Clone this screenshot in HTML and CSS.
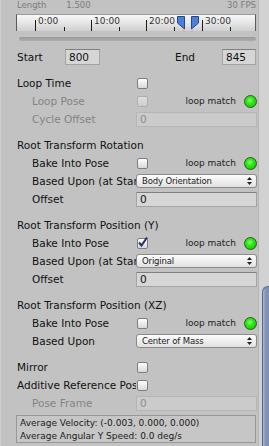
FILE: index.html
```html
<!DOCTYPE html>
<html>
<head>
<meta charset="utf-8">
<link rel="stylesheet" href="styles.css">
</head>
<body>
<div class="window">
  <div class="panel">
    <div class="len-row"><span class="len-label">Length</span><span class="len-val">1.500</span><span class="fps">30 FPS</span></div>
    <div class="ruler">
      <div class="tick major" style="left:18px"></div><span class="tlabel" style="left:21px">0:00</span>
      <div class="tick minor" style="left:47px"></div>
      <div class="tick major" style="left:74px"></div><span class="tlabel" style="left:77px">10:00</span>
      <div class="tick minor" style="left:102px"></div>
      <div class="tick major" style="left:129px"></div><span class="tlabel" style="left:132px">20:00</span>
      <div class="tick minor" style="left:157px"></div>
      <div class="tick major" style="left:185px"></div><span class="tlabel" style="left:188px">30:00</span>
      <div class="tick minor" style="left:213px"></div>
      <svg class="marker" style="left:160px" width="9" height="16" viewBox="0 0 9 16"><polygon points="0.5,0.5 7.5,0.5 7.5,13 0.5,7" fill="#4a7fda" stroke="#23468e"/><line x1="6" y1="14" x2="8" y2="16" stroke="#e8a070"/></svg>
      <svg class="marker" style="left:173px" width="9" height="16" viewBox="0 0 9 16"><polygon points="1.5,0.5 8.5,0.5 8.5,7 1.5,13" fill="#4a7fda" stroke="#23468e"/><line x1="3" y1="14" x2="1" y2="16" stroke="#e8a0c0"/></svg>
    </div>
    <div class="slider"></div>
    <div class="range-row">
      <span class="r-label">Start</span><span class="field short">800</span>
      <span class="r-label end">End</span><span class="field short">845</span>
    </div>

    <div class="group">
      <div class="row"><span class="label">Loop Time</span><div class="ctrl"><span class="cb"></span></div></div>
      <div class="row dis"><span class="label ind">Loop Pose</span><div class="ctrl"><span class="cb off"></span><span class="match">loop match</span><span class="dot"></span></div></div>
      <div class="row dis"><span class="label ind">Cycle Offset</span><div class="ctrl"><span class="field wide off">0</span></div></div>
    </div>

    <div class="group">
      <div class="row"><span class="label">Root Transform Rotation</span></div>
      <div class="row"><span class="label ind">Bake Into Pose</span><div class="ctrl"><span class="cb"></span><span class="match">loop match</span><span class="dot"></span></div></div>
      <div class="row"><span class="label ind">Based Upon (at Start)</span><div class="ctrl"><span class="drop">Body Orientation<svg class="arr" width="5" height="8" viewBox="0 0 5 8"><polygon points="2.5,0 5,3 0,3" fill="#222"/><polygon points="0,5 5,5 2.5,8" fill="#222"/></svg></span></div></div>
      <div class="row"><span class="label ind">Offset</span><div class="ctrl"><span class="field wide">0</span></div></div>
    </div>

    <div class="group">
      <div class="row"><span class="label">Root Transform Position (Y)</span></div>
      <div class="row"><span class="label ind">Bake Into Pose</span><div class="ctrl"><span class="cb on"><svg width="11" height="11" viewBox="0 0 11 11"><path d="M2 5.5 L4.5 8.5 L10 0.5" fill="none" stroke="#1f3466" stroke-width="2"/></svg></span><span class="match">loop match</span><span class="dot"></span></div></div>
      <div class="row"><span class="label ind">Based Upon (at Start)</span><div class="ctrl"><span class="drop">Original<svg class="arr" width="5" height="8" viewBox="0 0 5 8"><polygon points="2.5,0 5,3 0,3" fill="#222"/><polygon points="0,5 5,5 2.5,8" fill="#222"/></svg></span></div></div>
      <div class="row"><span class="label ind">Offset</span><div class="ctrl"><span class="field wide">0</span></div></div>
    </div>

    <div class="group">
      <div class="row"><span class="label">Root Transform Position (XZ)</span></div>
      <div class="row"><span class="label ind">Bake Into Pose</span><div class="ctrl"><span class="cb"></span><span class="match">loop match</span><span class="dot"></span></div></div>
      <div class="row"><span class="label ind">Based Upon</span><div class="ctrl"><span class="drop">Center of Mass<svg class="arr" width="5" height="8" viewBox="0 0 5 8"><polygon points="2.5,0 5,3 0,3" fill="#222"/><polygon points="0,5 5,5 2.5,8" fill="#222"/></svg></span></div></div>
    </div>

    <div class="group">
      <div class="row"><span class="label">Mirror</span><div class="ctrl"><span class="cb"></span></div></div>
      <div class="row"><span class="label">Additive Reference Pose</span><div class="ctrl"><span class="cb"></span></div></div>
      <div class="row dis"><span class="label ind">Pose Frame</span><div class="ctrl"><span class="field wide off">0</span></div></div>
    </div>

    <div class="info">
      <div>Average Velocity: (-0.003, 0.000, 0.000)</div>
      <div>Average Angular Y Speed: 0.0 deg/s</div>
    </div>
  </div>
  <div class="gutter"><div class="thumb"></div></div>
</div>
</body>
</html>
```
FILE: styles.css
```css
html, body {
  margin: 0;
  padding: 0;
}
body {
  background: #c2c2c2;
  font-family: "DejaVu Sans", sans-serif;
  font-size: 10.5px;
  color: #111;
}
.window {
  display: flex;
  width: 269px;
  height: 446px;
  overflow: hidden;
}
.panel {
  width: 258px;
  box-sizing: border-box;
  padding: 0 2px 0 15px;
  border-left: 1px solid #cdcdcd;
  margin-left: 0;
}
.len-row {
  display: flex;
  height: 11px;
  line-height: 11px;
  font-size: 8.5px;
  color: #7c7c7c;
  padding-left: 1px;
}
.len-val { margin-left: 20px; }
.fps { margin-left: auto; }
.ruler {
  position: relative;
  margin-top: 3px;
  height: 17px;
  box-sizing: border-box;
  border: 1px solid #5a5a5a;
  border-top-color: #9a9a9a;
  border-bottom: none;
  background: linear-gradient(#f7f7f7, #e6e6e6 50%, #cfcfcf);
}
.tick {
  position: absolute;
  bottom: 0;
  width: 1px;
  background: #1a1a1a;
}
.tick.major { height: 11px; }
.tick.minor { height: 4px; }
.tlabel {
  position: absolute;
  top: 1px;
  font-size: 9px;
  line-height: 11px;
  color: #333;
}
.marker {
  position: absolute;
  top: 1px;
}
.slider {
  margin: 6px 0 0 3px;
  height: 4px;
  border-radius: 2px;
  background: linear-gradient(#9a9a9a, #adadad);
}
.range-row {
  display: flex;
  align-items: center;
  height: 18px;
  margin-top: 7px;
  padding-left: 1px;
}
.r-label { width: 48px; }
.r-label.end { margin-left: auto; width: 47px; }
.field {
  box-sizing: border-box;
  height: 16px;
  line-height: 14px;
  padding-left: 3px;
  background: #d6d6d6;
  border: 1px solid #a4a4a4;
  border-top-color: #808080;
  color: #111;
}
.field.short { width: 35px; }
.field.short:last-child { width: 34px; }
.field.wide { width: 121px; height: 15px; line-height: 13px; }
.field.off {
  background: #cbcbcb;
  border-color: #b6b6b6;
  color: #8e8e8e;
}
.group { margin-top: 8px; }
.group:first-of-type { margin-top: 10px; }
.row {
  display: flex;
  align-items: center;
  height: 18px;
  padding-left: 1px;
}
.label {
  box-sizing: border-box;
  width: 119px;
  flex: none;
  white-space: nowrap;
  overflow: hidden;
}
.label.ind { padding-left: 15px; }
.row:not(:has(.ctrl)) .label { width: auto; overflow: visible; }
.row.dis .label { color: #848484; }
.ctrl {
  display: flex;
  align-items: center;
  width: 121px;
  flex: none;
}
.cb {
  box-sizing: border-box;
  width: 11px;
  height: 11px;
  margin-left: 1px;
  border: 1px solid #7e7e7e;
  border-radius: 2px;
  background: linear-gradient(#fefefe, #d9d9d9);
  position: relative;
}
.cb.off {
  border-color: #adadad;
  background: linear-gradient(#dedede, #cdcdcd);
}
.cb.on svg {
  position: absolute;
  left: -1px;
  top: -2px;
}
.match {
  margin-left: auto;
  margin-right: 8px;
  font-size: 9px;
  color: #222;
}
.dot {
  box-sizing: border-box;
  width: 13px;
  height: 13px;
  border-radius: 50%;
  border: 1px solid #1f6314;
  background: radial-gradient(circle at 45% 40%, #8cff6a 0, #33e81c 35%, #1fc80f 75%, #168c0b 100%);
}
.drop {
  position: relative;
  box-sizing: border-box;
  width: 121px;
  height: 14px;
  line-height: 12px;
  padding-left: 5px;
  font-size: 8.5px;
  letter-spacing: -0.15px;
  border: 1px solid #8a8a8a;
  border-radius: 3px;
  background: linear-gradient(#fdfdfd, #ececec 60%, #e0e0e0);
  color: #1a1a1a;
}
.arr {
  position: absolute;
  right: 4px;
  top: 2px;
}
.info {
  margin-top: 3px;
  box-sizing: border-box;
  height: 28px;
  padding: 1px 0 0 3px;
  border: 1px solid #989898;
  background: #c6c6c6;
  font-size: 9px;
  line-height: 12.5px;
  color: #1a1a1a;
  white-space: nowrap;
}
.gutter {
  width: 11px;
  flex: none;
  box-sizing: border-box;
  padding-left: 3px;
  border-left: 1px solid #b5b5b5;
  background: #d2d2d2;
}
.thumb {
  margin-top: 286px;
  height: 200px;
  box-sizing: border-box;
  border-left: 1px solid #56678c;
  border-top: 1px solid #56678c;
  border-top-left-radius: 6px;
  background: linear-gradient(90deg, #aebbd6, #8595b8 40%, #7e8eb2);
}
```
